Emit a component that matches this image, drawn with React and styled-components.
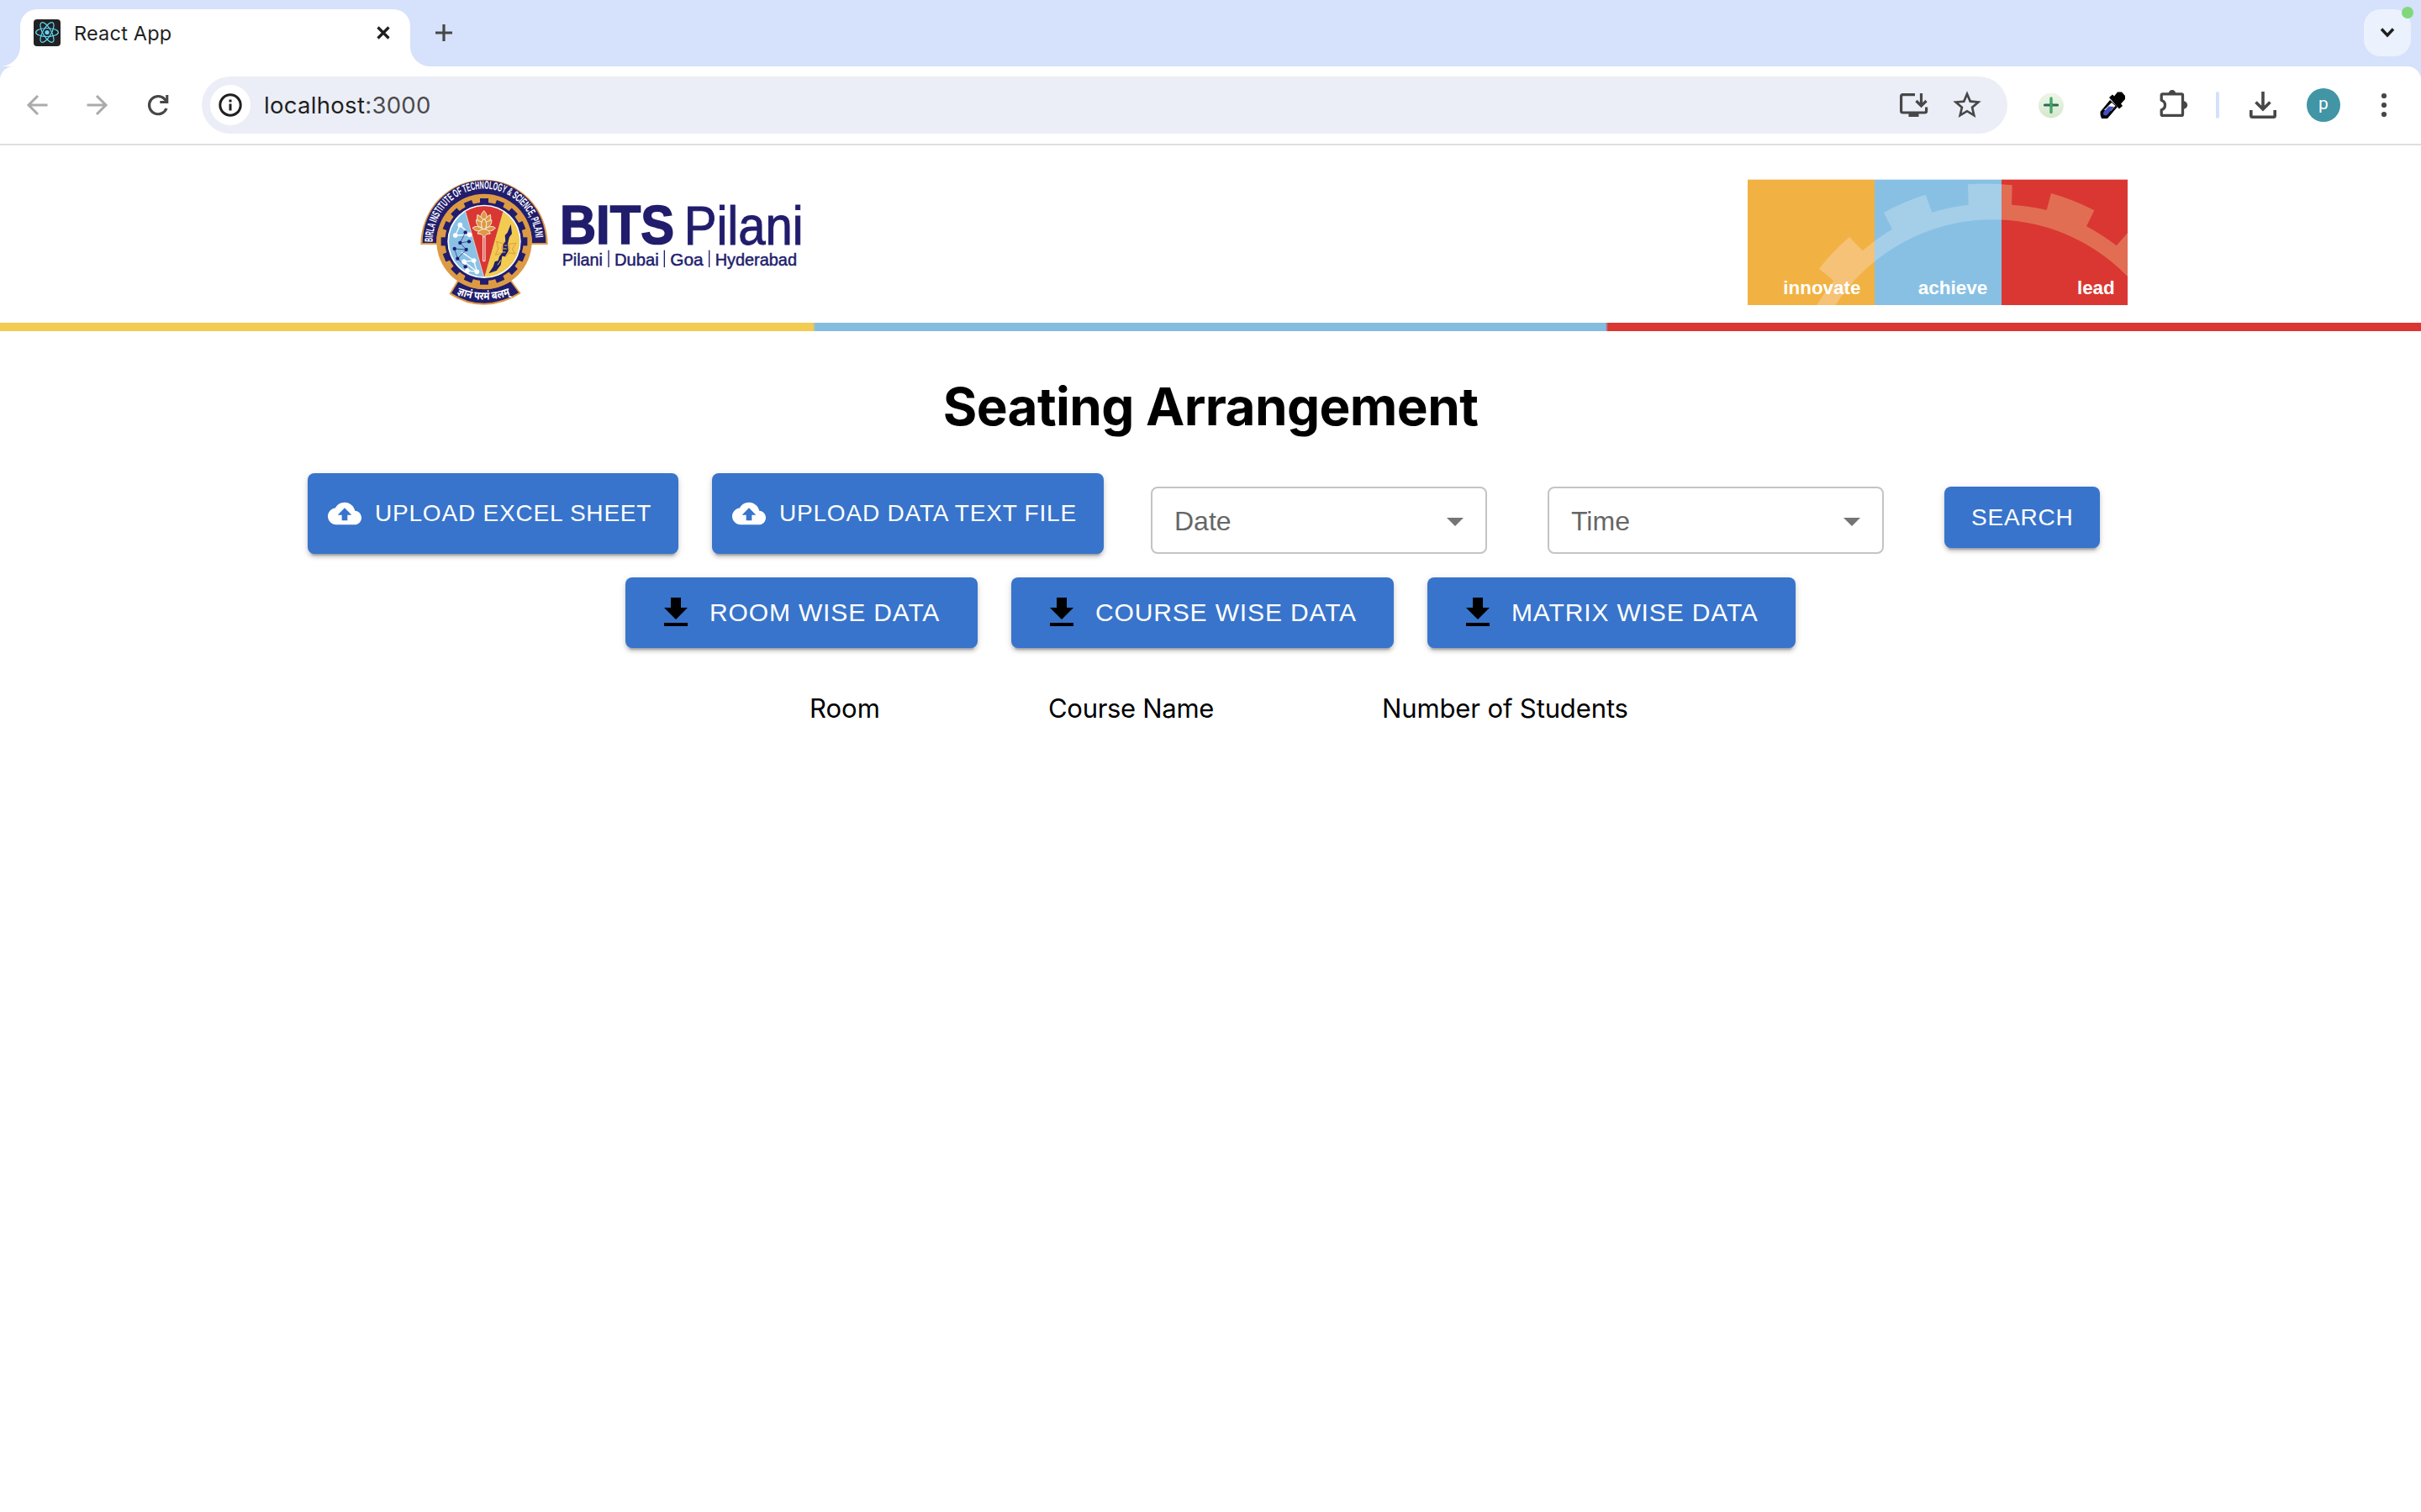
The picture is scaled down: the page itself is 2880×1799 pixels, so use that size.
import React from "react";
import styled, { createGlobalStyle, css } from "styled-components";

const NAVY = "#211d6c";
const ui = `Inter, Roboto, "Liberation Sans", sans-serif`;
const helv = `"Liberation Sans", Arial, sans-serif`;

const GlobalStyle = createGlobalStyle`
  *, *::before, *::after { box-sizing: border-box; }
  html, body { margin: 0; padding: 0; background: #fff; }
  body { font-family: ${ui}; color: #000; overflow: hidden; }
  svg { display: block; flex: none; overflow: visible; }
`;

const Window = styled.div`
  width: 2880px;
  height: 1799px;
  display: flex;
  flex-direction: column;
  overflow: hidden;
  background: #fff;
`;

/* ---------- browser chrome ---------- */

const TabStrip = styled.div`
  height: 79px;
  padding: 11px 12px 0 24px;
  display: flex;
  background: #d6e1fb;
`;

const Tab = styled.div`
  position: relative;
  width: 464px;
  height: 68px;
  padding: 0 12px 12px 16px;
  display: flex;
  align-items: center;
  background: #fff;
  border-radius: 20px 20px 0 0;

  &::before,
  &::after {
    content: "";
    position: absolute;
    bottom: 0;
    width: 24px;
    height: 24px;
  }
  &::before {
    right: 100%;
    background: radial-gradient(circle at 0 0, transparent 23.5px, #fff 24.5px);
  }
  &::after {
    left: 100%;
    background: radial-gradient(circle at 100% 0, transparent 23.5px, #fff 24.5px);
  }
`;

const TabTitle = styled.span`
  flex: 1;
  margin-left: 16px;
  font-size: 23.5px;
  letter-spacing: 0.2px;
  color: #1f1f1f;
`;

const NewTab = styled.div`
  width: 56px;
  height: 56px;
  margin-left: 12px;
  display: flex;
  align-items: center;
  justify-content: center;
`;

const TabSearch = styled.div`
  position: relative;
  width: 56px;
  height: 56px;
  margin-left: auto;
  display: flex;
  align-items: center;
  justify-content: center;
  background: #ebf2fd;
  border-radius: 20px;
`;

const StatusDot = styled.span`
  position: absolute;
  top: -3px;
  right: -3px;
  width: 14px;
  height: 14px;
  border-radius: 50%;
  background: #80d87b;
`;

const ToolbarBack = styled.div`
  background: #d6e1fb;
`;

const Toolbar = styled.div`
  height: 94px;
  padding: 0 24px;
  display: flex;
  align-items: center;
  gap: 32px;
  background: #fff;
  border-bottom: 2px solid #dfdfdf;
  border-radius: 16px 16px 0 0;
`;

const IconSlot = styled.div`
  width: 40px;
  height: 40px;
  flex: none;
  display: flex;
  align-items: center;
  justify-content: center;
`;

const Extensions = styled.div`
  display: flex;
  gap: 33px;
`;

const Omnibox = styled.div`
  width: 2148px;
  height: 68px;
  padding: 0 28px 0 10px;
  display: flex;
  align-items: center;
  background: #ebeef6;
  border-radius: 34px;
`;

const SiteInfo = styled.div`
  width: 48px;
  height: 48px;
  display: flex;
  align-items: center;
  justify-content: center;
  background: #fff;
  border-radius: 50%;
`;

const Address = styled.span`
  flex: 1;
  margin-left: 16px;
  font-size: 27.5px;
  letter-spacing: 0.3px;
  color: #1f1f1f;
`;

const Port = styled.span`
  color: #4a4a4c;
`;

const OmniActions = styled.div`
  display: flex;
  gap: 24px;
`;

const Divider = styled.div`
  width: 4px;
  height: 32px;
  margin-left: -2px;
  border-radius: 2px;
  background: #d3e1fb;
`;

const Avatar = styled.div`
  width: 40px;
  height: 40px;
  padding-bottom: 4px;
  display: flex;
  align-items: center;
  justify-content: center;
  border-radius: 50%;
  background: #4195a5;
  color: #fff;
  font: 400 21px/36px Roboto, sans-serif;
`;

/* ---------- page ---------- */

const Brand = styled.header`
  height: 211px;
  padding: 27px 349px 0 490px;
  display: flex;
  justify-content: space-between;
`;

const BannerSlot = styled.div`
  padding-top: 13px;
`;

const Stripe = styled.div`
  height: 10px;
  background: linear-gradient(
    90deg,
    #f2cb50 967px,
    #84bce0 970px,
    #84bce0 1910px,
    #da3732 1913px
  );
`;

const Title = styled.h1`
  margin: 52px 0 41px;
  font-size: 62px;
  line-height: 76px;
  font-weight: 700;
  letter-spacing: -0.6px;
  text-align: center;
`;

const FilterRow = styled.div`
  height: 96px;
  padding-left: 366px;
  display: flex;
  align-items: flex-end;
  gap: 72px;
`;

const UploadGroup = styled.div`
  display: flex;
  gap: 40px;
  margin-right: -16px;
`;

const DownloadRow = styled.div`
  margin-top: 28px;
  display: flex;
  justify-content: center;
  gap: 40px;
`;

const sizes = {
  upload: css`
    height: 96px;
    padding: 0 0 0 24px;
    font-size: 28px;
    letter-spacing: 0.8px;
  `,
  search: css`
    height: 73px;
    margin-bottom: 7px;
    padding: 0 0 0 32px;
    font-size: 28px;
    letter-spacing: 0.8px;
  `,
  download: css`
    height: 84px;
    padding: 0 0 0 36px;
    font-size: 30px;
    letter-spacing: 0.857px;
  `,
};

const Button = styled.button`
  width: ${(p) => p.$width}px;
  border: 0;
  display: flex;
  align-items: center;
  gap: 16px;
  border-radius: 8px;
  background: #3874cb;
  color: #fff;
  font-family: ${helv};
  line-height: 1.75;
  white-space: nowrap;
  box-shadow: 0 6px 2px -4px rgba(0, 0, 0, 0.2), 0 4px 4px 0 rgba(0, 0, 0, 0.14),
    0 2px 10px 0 rgba(0, 0, 0, 0.12);
  ${(p) => sizes[p.$kind]}
`;

const ButtonLabel = styled.span`
  padding-bottom: ${(p) => p.$lift || 0}px;
`;

const Select = styled.div`
  width: 400px;
  height: 80px;
  padding: 1px 12px 0 26px;
  display: flex;
  align-items: center;
  justify-content: space-between;
  border: 2px solid #c4c4c4;
  border-radius: 8px;
  color: #666;
  font: 400 32px/46px ${helv};
`;

const HeadRow = styled.div`
  margin-top: 52px;
  padding-left: 963px;
  display: flex;
  font-size: 31px;
  line-height: 40px;
`;

const HeadCell = styled.div`
  width: ${(p) => p.$width}px;
  letter-spacing: ${(p) => p.$track}px;
  white-space: nowrap;
`;

/* ---------- drawings ---------- */

const ReactMark = () => (
  <svg width="32" height="32" viewBox="0 0 32 32">
    <rect width="32" height="32" rx="4" fill="#222" />
    <g fill="none" stroke="#61dafb" strokeWidth="1.2">
      {[0, 60, 120].map((a) => (
        <ellipse key={a} cx="16" cy="15.5" rx="13.4" ry="5" transform={`rotate(${a} 16 15.5)`} />
      ))}
    </g>
    <circle cx="16" cy="15.5" r="2.6" fill="#61dafb" />
  </svg>
);

const Line = ({ size = 32, w = 3, color = "#474747", d }) => (
  <svg width={size} height={size} viewBox={`0 0 ${size} ${size}`} fill="none" stroke={color} strokeWidth={w}>
    <path d={d} />
  </svg>
);

const PATHS = {
  close: "M1.5 1.5L14.5 14.5M14.5 1.5L1.5 14.5",
  plus: "M10 0V20M0 10H20",
  chevron: "M2 4.5L9 12L16 4.5",
  back: "M28.5 16H6M17 5L6 16L17 27",
  forward: "M3.5 16H26M15 5L26 16L15 27",
};

const Reload = () => (
  <svg width="32" height="32" viewBox="0 0 32 32">
    <path d="M26 20A10.6 10.6 0 1 1 23.8 8.8L26 11" fill="none" stroke="#474747" strokeWidth="3.2" />
    <path d="M28.3 4V14H18.3V11H25.2V4Z" fill="#474747" />
  </svg>
);

const InfoIcon = () => (
  <svg width="28" height="28" viewBox="0 0 28 28">
    <circle cx="14" cy="14" r="12.2" fill="none" stroke="#1f1f1f" strokeWidth="3" />
    <path d="M12.5 12.5h3v8h-3zM12.5 7.5h3v3h-3z" fill="#1f1f1f" />
  </svg>
);

const InstallIcon = () => (
  <svg width="34" height="32" viewBox="0 0 34 32" fill="none" stroke="#474747" strokeWidth="3.2">
    <path d="M19 3.6H4.6Q2.6 3.6 2.6 5.6V23Q2.6 25 4.6 25H30.6Q32.6 25 32.6 23V18.5" />
    <path d="M26.5 2V17M20.5 11L26.5 17L32.5 11" />
    <path d="M11.5 25H23.5V30H11.5Z" fill="#474747" stroke="none" />
  </svg>
);

const StarIcon = () => (
  <svg width="40" height="40" viewBox="0 0 24 24" fill="#474747">
    <path d="M22 9.24l-7.19-.62L12 2 9.19 8.63 2 9.24l5.46 4.73L5.82 21 12 17.27 18.18 21l-1.63-7.03L22 9.24zM12 15.4l-3.76 2.27 1-4.28-3.32-2.88 4.38-.38L12 6.1l1.71 4.04 4.38.38-3.32 2.88 1 4.28L12 15.4z" />
  </svg>
);

const GreenPlus = () => (
  <svg width="32" height="32" viewBox="0 0 32 32">
    <defs>
      <linearGradient id="plusDisc" x1="0" y1="0" x2="0" y2="1">
        <stop offset="0" stopColor="#eef6ea" />
        <stop offset="1" stopColor="#d5e8cd" />
      </linearGradient>
    </defs>
    <circle cx="16" cy="16.5" r="15" fill="url(#plusDisc)" />
    <path d="M16 8V24.5" stroke="#45a866" strokeWidth="3.4" strokeLinecap="round" />
    <path d="M8.5 16H23.5" stroke="#266a58" strokeWidth="3.2" strokeLinecap="round" />
    <path d="M14.4 16H17.6" stroke="#45a866" strokeWidth="3" />
  </svg>
);

const DropperIcon = () => (
  <svg width="32" height="32" viewBox="0 0 32 32">
    <path d="M13 10L22 18L10 32H3Q1 28 1.5 24Z" fill="#000" />
    <path d="M15 13L19.5 17L14 23L6 22Z" fill="#fff" />
    <path d="M11.5 17.5L18 18L9 28.5L5.5 28Q4.5 26 5.5 24Z" fill="#3f50bf" />
    <path d="M12 7L16 3.5L18 5.5L22 0.5H27L31 5V9L26 14.5L28 17L24 20.5Z" fill="#000" />
  </svg>
);

const PuzzleIcon = () => (
  <svg width="36" height="36" viewBox="0 0 36 36">
    <path
      d="M4.7 4.8H27Q28.5 4.8 28.5 6.3V28.9Q28.5 30.4 27 30.4H4.7Q3.2 30.4 3.2 28.9V23.8Q7.5 22.3 7.5 18Q7.5 13.7 3.2 12.2V6.3Q3.2 4.8 4.7 4.8Z"
      fill="none"
      stroke="#474747"
      strokeWidth="3.3"
      strokeLinejoin="round"
    />
    <path d="M11.5 4.8A4.5 4.8 0 0 1 20.5 4.8ZM29.5 13.3A4.7 4.7 0 0 1 29.5 22.7Z" fill="#474747" />
  </svg>
);

const DownloadTray = () => (
  <svg width="32" height="32" viewBox="0 0 32 32" fill="none" stroke="#474747" strokeWidth="3.6">
    <path d="M16 0V21M7.5 12.5L16 21L24.5 12.5M1.8 22V28.5Q1.8 30.2 3.5 30.2H28.5Q30.2 30.2 30.2 28.5V22" />
  </svg>
);

const Dots = () => (
  <svg width="8" height="32" viewBox="0 0 8 32" fill="#474747">
    <circle cx="4" cy="5" r="3.1" />
    <circle cx="4" cy="16" r="3.1" />
    <circle cx="4" cy="27" r="3.1" />
  </svg>
);

const CloudUpload = () => (
  <svg width="40" height="40" viewBox="0 0 24 24" fill="#fff">
    <path d="M19.35 10.04C18.67 6.59 15.64 4 12 4 9.11 4 6.6 5.64 5.35 8.04 2.34 8.36 0 10.91 0 14c0 3.31 2.69 6 6 6h13c2.76 0 5-2.24 5-5 0-2.64-2.05-4.78-4.65-4.96zM14 13v4h-4v-4H7l5-5 5 5h-3z" />
  </svg>
);

const DownloadIcon = () => (
  <svg width="48" height="48" viewBox="0 0 24 24" fill="#000">
    <path d="M5 20h14v-2H5v2zM19 9h-4V3H9v6H5l7 7 7-7z" />
  </svg>
);

const DropArrow = () => (
  <svg width="48" height="48" viewBox="0 0 24 24" fill="#757575">
    <path d="M7 10l5 5 5-5z" />
  </svg>
);

const whiteBonds = "M172 203L155 240L206 238M172 203L206 238M186 334L221 330L232 370L198 366L186 334L232 370M178 300L221 330";
const navyBonds = "M191 229L172 267L204 262M152 288L194 291L163 323L152 288M172 267L194 291M163 323L191 352";
const whiteDots = [[172, 203], [155, 240], [206, 238], [221, 330], [186, 334], [232, 370], [198, 366]];
const navyDots = [[191, 229], [172, 267], [204, 262], [152, 288], [194, 291], [163, 323], [191, 352]];

const Emblem = () => (
  <g>
    {/* arched name band */}
    <path d="M31 273A227 232 0 0 1 485 273H424V262H92V273Z" fill="#dd9a44" />
    <path d="M38 267A220 223 0 0 1 478 267H429A171 171 0 0 0 87 267Z" fill={NAVY} />
    {/* motto ribbon */}
    <path d="M163 400L133 449Q190 488 258 488T389 447L354 400Z" fill="#dd9a44" />
    <path d="M166 406L141 446Q196 482 258 482T381 445L352 406Q258 460 166 406Z" fill={NAVY} />
    {/* gear */}
    <circle cx="258" cy="262" r="170" fill="#dd9a44" />
    <circle cx="258" cy="262" r="140" fill={NAVY} />
    {Array.from({ length: 16 }, (_, i) => (
      <rect key={i} x="243" y="108" width="30" height="24" fill={NAVY} transform={`rotate(${i * 22.5} 258 262)`} />
    ))}
    <circle cx="258" cy="262" r="131" fill="#fff" />
    <g clipPath="url(#shield)">
      <rect x="120" y="130" width="280" height="270" fill="#8ac2e6" />
      <path d="M182 125L258 393L334 125Z" fill="#da3732" />
      <path d="M334 125L258 393L400 400V125Z" fill="#f2cb50" />
      <path d="M181 120L258 392" stroke="#fff" strokeWidth="2" />
    </g>
    {/* molecules */}
    <path d={whiteBonds} fill="none" stroke="#fff" strokeWidth="4" />
    <path d={navyBonds} fill="none" stroke={NAVY} strokeWidth="2" />
    {whiteDots.map(([x, y], i) => <circle key={i} cx={x} cy={y} r="8.5" fill="#fff" />)}
    {navyDots.map(([x, y], i) => <circle key={i} cx={x} cy={y} r="6.5" fill={NAVY} />)}
    {/* lotus */}
    <path d="M254 244V332H261V244" fill="#da3732" stroke="#fff" strokeWidth="3" />
    <g fill="#dd9a44" stroke="#fff" strokeWidth="2.5" strokeLinejoin="round">
      <path d="M257 152Q240 170 249 186H265Q274 170 257 152Z" />
      <path d="M234 166Q228 186 246 202L254 184Q246 172 234 166ZM280 166Q286 186 268 202L260 184Q268 172 280 166Z" />
      <path d="M230 184Q226 204 248 214L252 194ZM284 184Q288 204 266 214L262 194Z" />
      <path d="M257 180Q238 200 257 222Q276 200 257 180Z" />
      <path d="M216 214Q230 200 254 218Q234 234 216 214ZM298 214Q284 200 260 218Q280 234 298 214Z" />
      <path d="M234 234Q240 218 257 218Q274 218 280 234Q266 232 257 246Q248 232 234 234Z" />
    </g>
    {/* rocket and rays */}
    <path
      d="M302 262L326 270L340 252L346 272L372 268L358 288L368 306L346 302L334 318L326 302L298 310L308 288Z"
      fill="none"
      stroke="#dd9a44"
      strokeWidth="3"
    />
    <circle cx="334" cy="286" r="14" fill="none" stroke="#dd9a44" strokeWidth="3" />
    <path
      d="M353 200L357 234L348 246L342 268L344 296L332 316L322 314L317 346L302 366L274 376L290 352L296 334L308 330L312 316L324 300L326 272L334 262L332 240L341 230Z"
      fill={NAVY}
    />
    <path d="M330 276H340M326 288H338M322 300H334M318 328L306 346" stroke="#f2cb50" strokeWidth="3" />
    {/* lettering */}
    <text fontFamily={helv} fontWeight="700" fontSize="40" fill="#fff">
      <textPath href="#arch" textLength="572" lengthAdjust="spacingAndGlyphs">
        BIRLA INSTITUTE OF TECHNOLOGY &amp; SCIENCE, PILANI
      </textPath>
    </text>
    <text fontFamily={`"Noto Sans Devanagari", "Noto Sans", sans-serif`} fontWeight="700" fontSize="40" fill="#fff">
      <textPath href="#motto" textLength="196" lengthAdjust="spacingAndGlyphs">
        ज्ञानं परमं बलम्
      </textPath>
    </text>
  </g>
);

const campuses = [
  ["Pilani", 540, 138],
  ["Dubai", 727, 151],
  ["Goa", 926, 111],
  ["Hyderabad", 1086, 285],
];

const Logo = () => (
  <svg width="480" height="165" viewBox="0 0 1440 495">
    <defs>
      <clipPath id="shield">
        <circle cx="258" cy="262" r="126" />
      </clipPath>
      <path id="arch" d="M74 264A184 190 0 0 1 442 264" />
      <path id="motto" d="M160 450Q258 490 360 450" />
    </defs>
    <Emblem />
    <g fontFamily={helv} fill={NAVY}>
      <text x="528" y="271" fontSize="193" fontWeight="700" textLength="408" lengthAdjust="spacingAndGlyphs" stroke={NAVY} strokeWidth="5">
        BITS
      </text>
      <text x="971" y="272" fontSize="193" textLength="426" lengthAdjust="spacingAndGlyphs" stroke={NAVY} strokeWidth="3">
        Pilani
      </text>
      {campuses.map(([word, x, len]) => (
        <text key={word} x={x - 4} y="349" fontSize="62" textLength={len + 7} lengthAdjust="spacingAndGlyphs" stroke={NAVY} strokeWidth="1.5">
          {word}
        </text>
      ))}
      {[702, 901, 1061].map((x) => (
        <rect key={x} x={x - 2} y="293" width="4" height="61" />
      ))}
    </g>
  </svg>
);

const mottoWords = [
  ["innovate", 458, 271],
  ["achieve", 911, 243],
  ["lead", 1365, 129],
];

const Banner = () => (
  <svg width="452" height="150" viewBox="57 39 1356 450">
    <defs>
      <linearGradient id="gearTint" gradientUnits="userSpaceOnUse" x1="57" x2="1413" y1="0" y2="0">
        <stop offset="0.3341" stopColor="#f5c277" />
        <stop offset="0.3341" stopColor="#a5cee9" />
        <stop offset="0.6681" stopColor="#a5cee9" />
        <stop offset="0.6681" stopColor="#e16e53" />
      </linearGradient>
    </defs>
    <rect x="57" y="41" width="453" height="448" fill="#f1b243" />
    <rect x="510" y="41" width="453" height="448" fill="#88c0e4" />
    <rect x="963" y="41" width="450" height="448" fill="#da3732" />
    <path
      d="M304 489A727 727 0 0 1 364 402L312 359A795 795 0 0 1 420 246L467 295A727 727 0 0 1 573 218L543 159A795 795 0 0 1 692 95L715 158A727 727 0 0 1 845 131L843 58A795 795 0 0 1 1001 61L999 131A727 727 0 0 1 1124 150L1140 90A795 795 0 0 1 1294 151L1266 208A727 727 0 0 1 1373 277L1413 231V387A670 670 0 0 0 370 489Z"
      fill="url(#gearTint)"
    />
    <g fontFamily={helv} fontWeight="700" fontSize="67" fill="#fff">
      {mottoWords.map(([word, end, len]) => (
        <text key={word} x={end - len - 3} y="450" textLength={len + 5} lengthAdjust="spacingAndGlyphs">
          {word}
        </text>
      ))}
    </g>
  </svg>
);

/* ---------- screen ---------- */

const uploads = [
  { label: "UPLOAD EXCEL SHEET", width: 441 },
  { label: "UPLOAD DATA TEXT FILE", width: 466 },
];

const downloads = [
  { label: "ROOM WISE DATA", width: 419 },
  { label: "COURSE WISE DATA", width: 455 },
  { label: "MATRIX WISE DATA", width: 438 },
];

const headings = [
  { label: "Room", width: 284, track: 0 },
  { label: "Course Name", width: 397, track: -0.3 },
  { label: "Number of Students", width: 320, track: -0.12 },
];

export default function App() {
  return (
    <Window>
      <GlobalStyle />
      <TabStrip>
        <Tab>
          <ReactMark />
          <TabTitle>React App</TabTitle>
          <IconSlot>
            <Line size={16} w={3.2} color="#1f1f1f" d={PATHS.close} />
          </IconSlot>
        </Tab>
        <NewTab>
          <Line size={20} w={3.2} d={PATHS.plus} />
        </NewTab>
        <TabSearch>
          <Line size={18} w={3.4} color="#1f1f1f" d={PATHS.chevron} />
          <StatusDot />
        </TabSearch>
      </TabStrip>

      <ToolbarBack>
        <Toolbar>
          <IconSlot><Line color="#ababab" d={PATHS.back} /></IconSlot>
          <IconSlot><Line color="#ababab" d={PATHS.forward} /></IconSlot>
          <IconSlot><Reload /></IconSlot>
          <Omnibox>
            <SiteInfo><InfoIcon /></SiteInfo>
            <Address>localhost<Port>:3000</Port></Address>
            <OmniActions>
              <IconSlot><InstallIcon /></IconSlot>
              <IconSlot><StarIcon /></IconSlot>
            </OmniActions>
          </Omnibox>
          <Extensions>
            <IconSlot><GreenPlus /></IconSlot>
            <IconSlot><DropperIcon /></IconSlot>
            <IconSlot><PuzzleIcon /></IconSlot>
          </Extensions>
          <Divider />
          <IconSlot><DownloadTray /></IconSlot>
          <Avatar>p</Avatar>
          <IconSlot><Dots /></IconSlot>
        </Toolbar>
      </ToolbarBack>

      <Brand>
        <Logo />
        <BannerSlot>
          <Banner />
        </BannerSlot>
      </Brand>
      <Stripe />

      <Title>Seating Arrangement</Title>

      <FilterRow>
        <UploadGroup>
          {uploads.map((b) => (
            <Button key={b.label} $kind="upload" $width={b.width}>
              <CloudUpload />
              <ButtonLabel $lift={2}>{b.label}</ButtonLabel>
            </Button>
          ))}
        </UploadGroup>
        <Select>Date<DropArrow /></Select>
        <Select>Time<DropArrow /></Select>
        <Button $kind="search" $width={185}>
          <ButtonLabel>SEARCH</ButtonLabel>
        </Button>
      </FilterRow>

      <DownloadRow>
        {downloads.map((b) => (
          <Button key={b.label} $kind="download" $width={b.width}>
            <DownloadIcon />
            <ButtonLabel>{b.label}</ButtonLabel>
          </Button>
        ))}
      </DownloadRow>

      <HeadRow>
        {headings.map((h) => (
          <HeadCell key={h.label} $width={h.width} $track={h.track}>{h.label}</HeadCell>
        ))}
      </HeadRow>
    </Window>
  );
}
